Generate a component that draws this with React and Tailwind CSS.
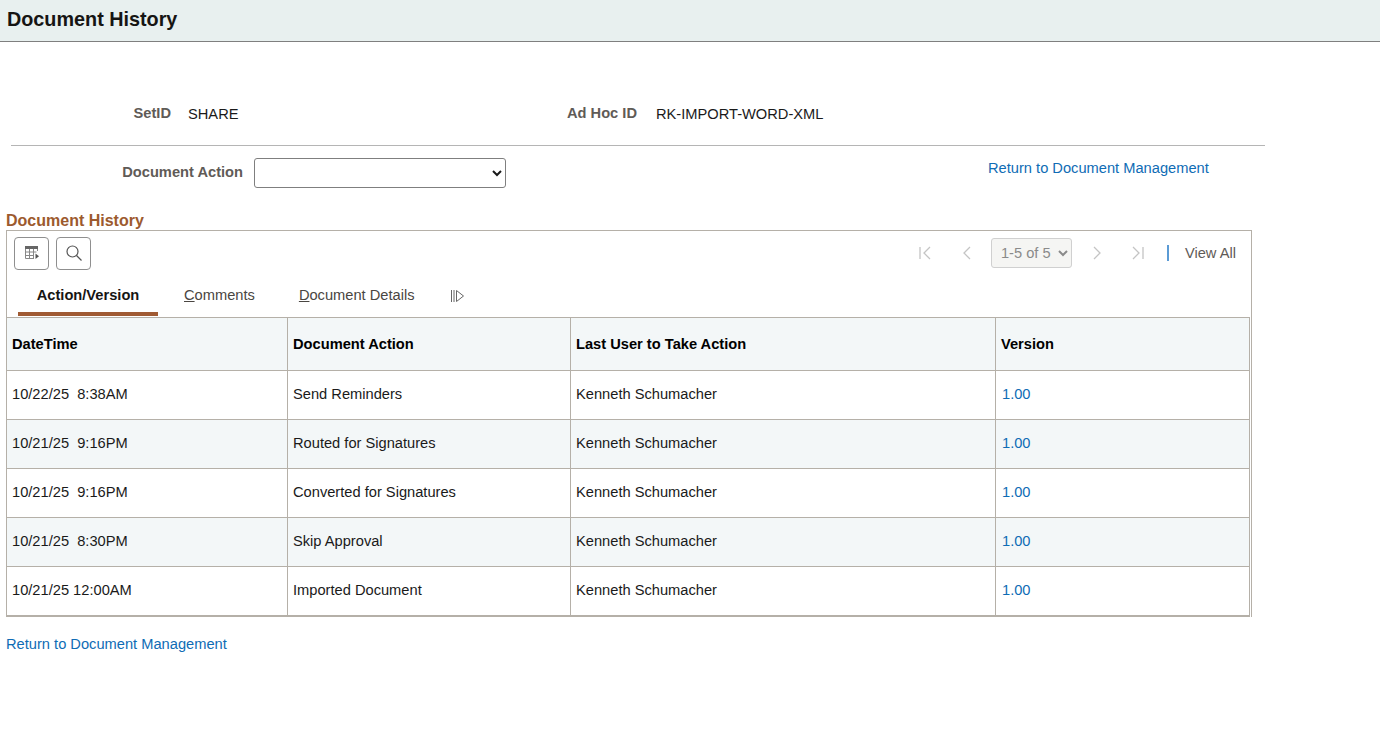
const rows = [
  { date: "10/22/25  8:38AM", action: "Send Reminders" },
  { date: "10/21/25  9:16PM", action: "Routed for Signatures" },
  { date: "10/21/25  9:16PM", action: "Converted for Signatures" },
  { date: "10/21/25  8:30PM", action: "Skip Approval" },
  { date: "10/21/25 12:00AM", action: "Imported Document" },
];

function GridIcon() {
  return (
    <svg width="16" height="16" viewBox="0 0 16 16" fill="none">
      <rect x="1" y="1" width="13" height="3" fill="#666" />
      <path d="M1.500 4v9.500H10M1.500 7h11M1.500 10.500h8.500M5.500 4v9.500M9.500 4v9.500M13.500 4v2" stroke="#888" strokeWidth="1" />
      <path d="M11.500 8.500l3.500 2.750-3.500 2.750z" fill="#555" />
    </svg>
  );
}

function PagerIcon({ d }) {
  return (
    <svg width="14" height="16" viewBox="0 0 14 16" fill="none" stroke="#c4c4c4" strokeWidth="1.300">
      <path d={d} />
    </svg>
  );
}

export default function App() {
  return (
    <div className="min-h-[752px] bg-white font-['Liberation_Sans',Arial,sans-serif] text-[14.67px] text-[#1a1a1a]">
      <div className="flex h-[42px] items-center border-b border-[#7f7f7f] bg-[#e8f0ef] pb-[2px] pl-[7px]">
        <h1 className="text-[19.8px] font-bold text-[#161513]">Document History</h1>
      </div>

      <div className="ml-[11px] w-[1254px] pt-[59px]">
        <div className="flex h-[45px] items-start border-b border-[#b5b5b5]">
          <span className="w-[160px] pt-px text-right font-bold text-[#5f5b57]">SetID</span>
          <span className="ml-[17px] w-[362px] pt-[2px]">SHARE</span>
          <span className="w-[87px] pt-px text-right font-bold text-[#5f5b57] whitespace-nowrap">Ad Hoc ID</span>
          <span className="ml-[19px] pt-[2px]">RK-IMPORT-WORD-XML</span>
        </div>
        <div className="flex h-[42px] items-start pt-3">
          <label className="w-[232px] pt-[3px] text-right font-bold text-[#5f5b57]">Document Action</label>
          <select className="ml-[11px] h-[30px] w-[252px] rounded-[3px] border border-[#7f7f7f] bg-white">
            <option></option>
          </select>
          <a className="ml-[482px] mt-[-1px] text-[#0f6cb5] whitespace-nowrap">Return to Document Management</a>
        </div>
      </div>

      <div className="ml-[6px] w-[1246px] pt-[24px]">
        <h2 className="h-[18px] text-[16px] leading-[18px] font-bold text-[#9c5a2e]">Document History</h2>
        <div className="border border-b-0 border-[#b5b0a8] pt-[4px] pr-[1px]">
          <div className="flex h-[36px] items-center pl-[7px]">
            <button className="flex h-[33px] w-[35px] items-center justify-center rounded-[4px] border border-[#8f8f8f] bg-white">
              <GridIcon />
            </button>
            <button className="ml-[7px] flex h-[33px] w-[35px] items-center justify-center rounded-[4px] border border-[#8f8f8f] bg-white">
              <svg width="18" height="18" viewBox="0 0 18 18" fill="none" stroke="#555" strokeWidth="1.200">
                <circle cx="7.500" cy="7.500" r="5.500" />
                <path d="M11.500 11.500l5 5" />
              </svg>
            </button>
            <div className="ml-auto flex items-center pr-[14px]">
              <PagerIcon d="M2 2v12M12 2 6 8l6 6" />
              <span className="ml-[28px]"><PagerIcon d="M10 2 4 8l6 6" /></span>
              <select disabled className="ml-[17px] h-[30px] w-[81px] rounded-[3px] border border-[#d0d0d0] bg-[#f5f5f3] pl-[5px] text-[#8a8a8a] opacity-100">
                <option>1-5 of 5</option>
              </select>
              <span className="ml-[18px]"><PagerIcon d="M4 2l6 6-6 6" /></span>
              <span className="ml-[27px]"><PagerIcon d="M2 2l6 6-6 6M12 2v12" /></span>
              <span className="ml-[22px] h-[16px] w-[2px] bg-[#5b9bd5]"></span>
              <a className="ml-[16px] text-[#5f5b57]">View All</a>
            </div>
          </div>

          <div className="flex h-[45px] items-start pl-[11px]">
            <div className="flex h-[45px] w-[140px] justify-center border-b-[4px] border-[#a05a33] pt-[13px] font-bold text-[#161513]">
              Action/Version
            </div>
            <div className="ml-[26px] pt-[13px] text-[#4a4642]"><u>C</u>omments</div>
            <div className="ml-[44px] pt-[13px] text-[#4a4642]"><u>D</u>ocument Details</div>
            <svg className="ml-[35px] mt-[17px]" width="16" height="16" viewBox="0 0 16 16" fill="none" stroke="#666" strokeWidth="1">
              <path d="M1.500 2v12M4 2v12M6.500 2.500l7 5.500-7 5.500z" />
            </svg>
          </div>

          <table className="ml-[-1px] mt-[1px] w-[1243px] table-fixed border-collapse border-b-2 border-[#b5b0a8]">
            <colgroup>
              <col className="w-[281px]" />
              <col className="w-[283px]" />
              <col className="w-[425px]" />
              <col className="w-[254px]" />
            </colgroup>
            <thead>
              <tr className="h-[53px] bg-[#f3f7f8] text-left">
                {["DateTime", "Document Action", "Last User to Take Action", "Version"].map((h) => (
                  <th key={h} className="border border-[#b5b0a8] pb-px pl-[5px] font-bold text-black">{h}</th>
                ))}
              </tr>
            </thead>
            <tbody>
              {rows.map((r, i) => (
                <tr key={i} className={i % 2 ? "h-[49px] bg-[#f3f7f8]" : "h-[49px] bg-white"}>
                  <td className="border border-[#b5b0a8] pb-[2px] pl-[5px] whitespace-pre">{r.date}</td>
                  <td className="border border-[#b5b0a8] pb-[2px] pl-[5px]">{r.action}</td>
                  <td className="border border-[#b5b0a8] pb-[2px] pl-[5px]">Kenneth Schumacher</td>
                  <td className="border border-[#b5b0a8] pb-[2px] pl-[6px] text-[#0f6cb5]">1.00</td>
                </tr>
              ))}
            </tbody>
          </table>
        </div>
        <a className="mt-[16px] block text-[#0f6cb5]">Return to Document Management</a>
      </div>
    </div>
  );
}
